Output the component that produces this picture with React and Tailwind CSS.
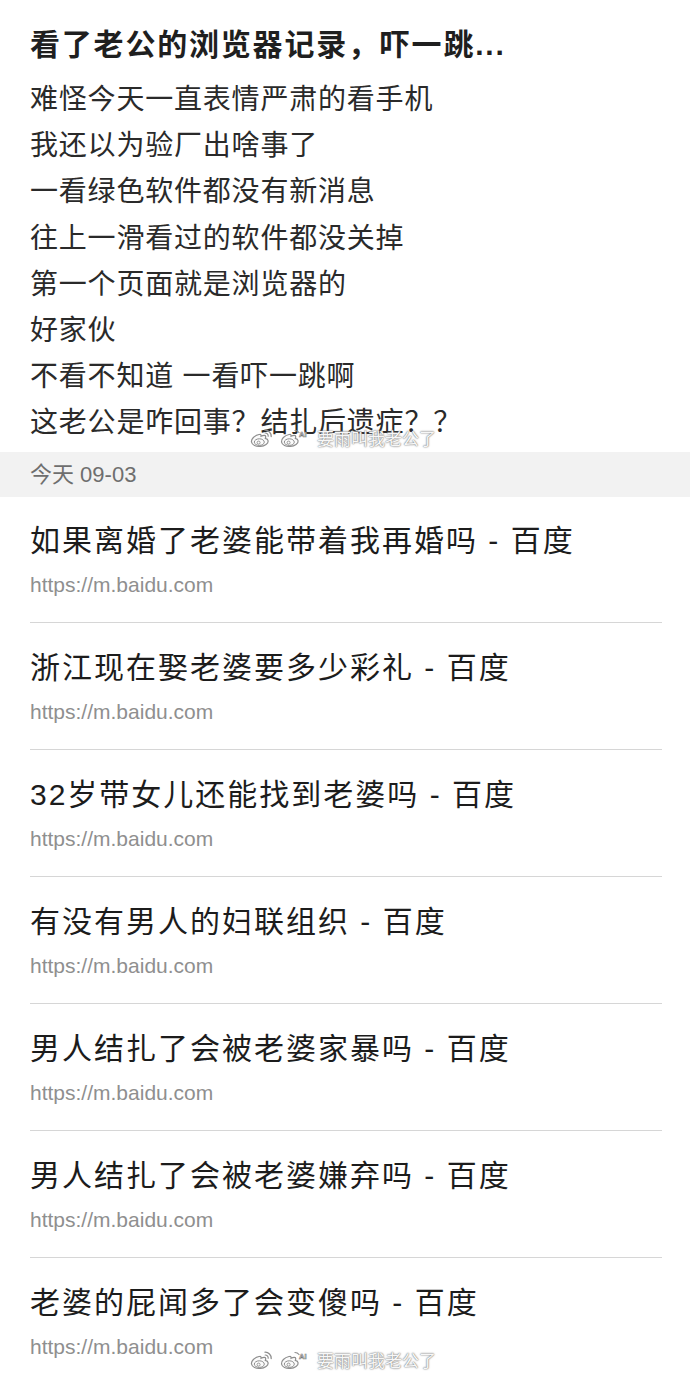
import React from "react";

const CJK = "font-['Liberation_Sans','Noto_Sans_CJK_SC',sans-serif]";

const bodyLines = [
  "难怪今天一直表情严肃的看手机",
  "我还以为验厂出啥事了",
  "一看绿色软件都没有新消息",
  "往上一滑看过的软件都没关掉",
  "第一个页面就是浏览器的",
  "好家伙",
  "不看不知道 一看吓一跳啊",
  "这老公是咋回事？结扎后遗症？？",
];

const items = [
  "如果离婚了老婆能带着我再婚吗 - 百度",
  "浙江现在娶老婆要多少彩礼 - 百度",
  "32岁带女儿还能找到老婆吗 - 百度",
  "有没有男人的妇联组织 - 百度",
  "男人结扎了会被老婆家暴吗 - 百度",
  "男人结扎了会被老婆嫌弃吗 - 百度",
  "老婆的屁闻多了会变傻吗 - 百度",
];

function WeiboLogo({ ai }) {
  return (
    <svg width={ai ? 30 : 23} height="20" viewBox={ai ? "0 0 30 20" : "0 0 23 20"} fill="none">
      <path
        d="M9 6.5C4.5 7.5 1 11 1.5 14c.5 3 4.5 4.8 8.8 4.4 4.6-.4 8.2-3 7.8-5.6-.2-1.6-1.8-2.2-2.8-2.4.6-1.2.7-2.6-.6-3-1.2-.4-2.8.4-3.6.8.2-1-.3-2-1.6-1.7z"
        fill="#fbfbfb"
        stroke="#8e8e8e"
        strokeWidth="1.2"
      />
      <ellipse cx="9.3" cy="14.1" rx="5" ry="3.3" stroke="#8e8e8e" strokeWidth="1" />
      <circle cx="8.6" cy="14.6" r="1.5" stroke="#8e8e8e" strokeWidth="0.9" />
      {!ai && (
        <>
          <path d="M15 2.2a6 6 0 0 1 6.2 6.3" stroke="#8e8e8e" strokeWidth="1.3" strokeLinecap="round" />
          <path d="M15.2 5a3 3 0 0 1 3 3.2" stroke="#8e8e8e" strokeWidth="1.2" strokeLinecap="round" />
        </>
      )}
      {ai && (
        <>
          <path d="M15 2.5a5 5 0 0 1 4 2" stroke="#8e8e8e" strokeWidth="1.2" strokeLinecap="round" />
          <text x="19" y="9" fontSize="7.5" fill="#fff" stroke="#777" strokeWidth="0.6" fontFamily="Liberation Sans, sans-serif" fontWeight="bold">
            AI
          </text>
        </>
      )}
    </svg>
  );
}

function Watermark({ top }) {
  return (
    <div className="absolute left-[250px] flex items-center gap-[7px]" style={{ top }}>
      <WeiboLogo />
      <WeiboLogo ai />
      <span className="text-[17px] leading-[20px] text-[#f7f7f7] font-['Noto_Sans_CJK_SC',sans-serif] [text-shadow:0_0_2px_#6f6f6f,0_0_1px_#8a8a8a]">
        要雨叫我老公了
      </span>
    </div>
  );
}

export default function App() {
  return (
    <div className={`relative w-[690px] h-[1377px] overflow-hidden bg-white ${CJK}`}>
      <div className="px-[30px] pt-[23px] pb-[5px]">
        <h1 className="text-[30px] leading-[44px] font-bold tracking-[1.8px] text-[#1f1f1f]">
          看了老公的浏览器记录，吓一跳...
        </h1>
        <div className="mt-[10px] text-[28px] leading-[46.2px] tracking-[0.8px] text-[#2a2a2a]">
          {bodyLines.map((l) => (
            <div key={l}>{l}</div>
          ))}
        </div>
      </div>

      <div className="h-[45px] bg-[#f2f2f2] flex items-center px-[30px] text-[22px] text-[#6e6e6e]">
        今天 09-03
      </div>

      <div className="ml-[30px] mr-[28px]">
        {items.map((t, i) => (
          <div
            key={t}
            className={`${i === 0 ? "pt-[24px]" : "pt-[25px]"} pb-[23px] border-b border-[#d6d6d6]`}
          >
            <div className="text-[30px] leading-[40px] tracking-[2px] text-[#1c1c1c] whitespace-nowrap">{t}</div>
            <div className="mt-[10px] text-[21px] leading-[28px] text-[#8f8f8f] font-['Liberation_Sans',sans-serif]">
              https://m.baidu.com
            </div>
          </div>
        ))}
      </div>

      <Watermark top={428} />
      <Watermark top={1350} />
    </div>
  );
}
